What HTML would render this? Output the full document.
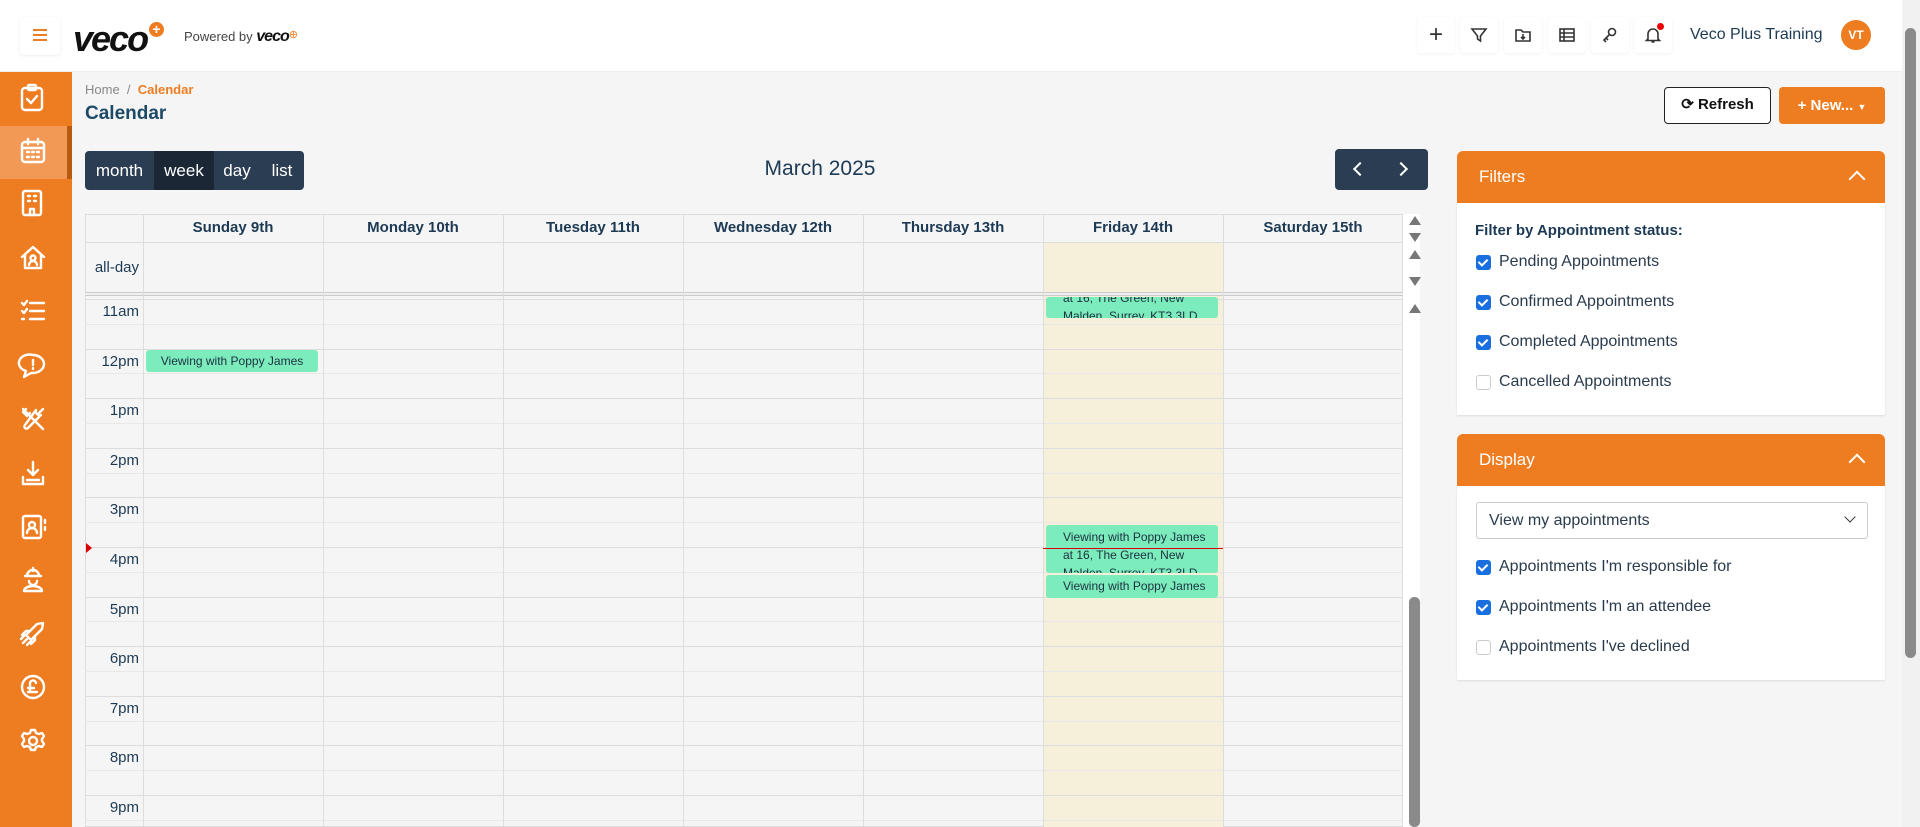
<!DOCTYPE html>
<html><head><meta charset="utf-8"><style>
*{box-sizing:border-box;margin:0;padding:0}
body{width:1920px;height:827px;overflow:hidden;background:#f5f5f5;font-family:"Liberation Sans",sans-serif;position:relative;color:#1d3a55}
.a{position:absolute}
.hdr{left:0;top:0;width:1902px;height:72px;background:#fff;border-bottom:1px solid #eee}
.side{left:0;top:72px;width:72px;height:755px;background:#ee7d22}
.hi{position:absolute;top:17px;width:38px;height:36px;border-radius:4px;box-shadow:0 1px 3px rgba(0,0,0,.06);display:flex;align-items:center;justify-content:center}
.vb{top:151px;height:39px;background:#2b3d52;color:#fff;font-size:17px;line-height:39px;text-align:center}
.line{position:absolute;left:85px;width:1318px;height:1px}
.col{position:absolute;top:214px;width:1px;height:613px;background:#ddd}
.dh{position:absolute;top:214px;width:180px;height:28px;line-height:28px;text-align:center;font-weight:bold;font-size:15px;color:#1d3a55}
.tl{position:absolute;left:85px;width:54px;text-align:right;font-size:15px;color:#1d3a55}
.ev{position:absolute;background:#7cecbc;border-radius:3px;font-size:12px;color:#1b3040;overflow:hidden;line-height:15px}
.cb{position:absolute;left:1476px;width:15px;height:15px;border-radius:3px;background:#1a6fe0}
.cb.off{background:#fff;border:1px solid #ccc}
.cb:not(.off)::after{content:"";position:absolute;left:4px;top:2px;width:4px;height:7px;border:solid #fff;border-width:0 2px 2px 0;transform:rotate(45deg)}
.cl{position:absolute;left:1499px;font-size:16px;color:#2a3b4c}
.ph{position:absolute;left:1457px;width:428px;height:52px;background:#ee7d22;border-radius:6px 6px 0 0;color:#fff;font-size:17px;line-height:52px;padding-left:22px}
.pb{position:absolute;left:1457px;width:428px;background:#fff;box-shadow:0 1px 2px rgba(0,0,0,.1)}
.chev{position:absolute;right:22px;top:22px;width:12px;height:12px;border-left:2px solid #fff;border-top:2px solid #fff;transform:rotate(45deg)}
.tri{position:absolute;left:1409px;width:0;height:0;border-left:6px solid transparent;border-right:6px solid transparent}
.up{border-bottom:9px solid #777}.dn{border-top:9px solid #777}
</style></head><body>
<div class="a hdr"></div>
<div class="a" style="left:20px;top:17px;width:40px;height:38px;border-radius:4px;box-shadow:0 1px 3px rgba(0,0,0,.08)"></div>
<div class="a" style="left:33px;top:29px;width:14px;height:2px;background:#ee7d22;box-shadow:0 5px 0 #ee7d22,0 10px 0 #ee7d22"></div>
<div class="a" style="left:73px;top:18px;font-size:36px;font-weight:bold;font-style:italic;color:#111;letter-spacing:-2px">veco</div>
<div class="a" style="left:149px;top:22px;width:15px;height:15px;border-radius:50%;background:#ee7d22;color:#fff;font-size:14px;line-height:14px;text-align:center;font-weight:bold">+</div>
<div class="a" style="left:184px;top:28px;font-size:13px;color:#444">Powered by <b style="font-style:italic;color:#111;font-size:16px;letter-spacing:-1px">veco</b><span style="color:#ee7d22;font-size:11px;vertical-align:top">⊕</span></div>
<div class="hi" style="left:1417px;font-size:24px;color:#333">+</div>
<div class="hi" style="left:1460px"><svg width="18" height="18" viewBox="0 0 18 18" fill="none" stroke="#333" stroke-width="1.6"><path d="M2 3h14l-5.5 7v5l-3-2V10z"/></svg></div>
<div class="hi" style="left:1504px"><svg width="18" height="18" viewBox="0 0 18 18" fill="none" stroke="#333" stroke-width="1.6"><path d="M2 4h5l2 2h7v9H2z M9 8v5 M7 11l2 2 2-2"/></svg></div>
<div class="hi" style="left:1548px"><svg width="18" height="18" viewBox="0 0 18 18" fill="none" stroke="#333" stroke-width="1.6"><rect x="2" y="3" width="14" height="12"/><path d="M2 7h14M2 11h14M6 3v12"/></svg></div>
<div class="hi" style="left:1591px"><svg width="18" height="18" viewBox="0 0 18 18" fill="none" stroke="#333" stroke-width="1.6"><circle cx="11" cy="6" r="3.5"/><path d="M8.5 8.5L3 14l2 2M5 12l2 2"/></svg></div>
<div class="hi" style="left:1634px"><svg width="20" height="20" viewBox="0 0 20 20" fill="none" stroke="#333" stroke-width="1.6"><path d="M5 14V9a5 5 0 0110 0v5l1.5 1.5h-13z M8.5 17h3"/></svg><span class="a" style="right:8px;top:6px;width:7px;height:7px;border-radius:50%;background:#e00"></span></div>
<div class="a" style="left:1690px;top:26px;font-size:16px;color:#1d3a55">Veco Plus Training</div>
<div class="a" style="left:1841px;top:20px;width:30px;height:30px;border-radius:50%;background:#ee7d22;color:#fff;font-size:12px;font-weight:bold;text-align:center;line-height:30px">VT</div>
<div class="a" style="left:1902px;top:0;width:18px;height:827px;background:#f1f1f1"></div>
<div class="a" style="left:1905px;top:28px;width:11px;height:630px;border-radius:6px;background:#8a8a8a"></div>

<div class="a side"></div>
<div class="a" style="left:0;top:126px;width:72px;height:53px;background:#f29a55;border-right:5px solid #b85a10"></div>
<svg class="a" style="left:0;top:72px" width="72" height="700" fill="none" stroke="#fff" stroke-width="2.4" stroke-linecap="round" stroke-linejoin="round">
<g transform="translate(20,12)"><rect x="2" y="4" width="20" height="22" rx="3"/><rect x="8" y="1" width="8" height="5" rx="1"/><path d="M7 15l4 4 6-7"/></g>
<g transform="translate(20,66)"><rect x="2" y="4" width="22" height="20" rx="3"/><path d="M2 10h22M8 1v5M18 1v5M7 14h2M12 14h2M17 14h2M7 19h2M12 19h2M17 19h2"/></g>
<g transform="translate(22,118)"><rect x="1" y="1" width="18" height="24" rx="2"/><path d="M6 6h2M12 6h2M6 11h2M12 11h2M8 25v-6h4v6"/></g>
<g transform="translate(20,172)"><path d="M2 13L13 3l11 10M5 11v13h16V11"/><circle cx="13" cy="14" r="2.5"/><path d="M9 21a4 4 0 018 0"/></g>
<g transform="translate(20,226)"><path d="M2 5l2 2 3-4M2 13l2 2 3-4M2 21h2M10 5h14M10 13h14M10 21h14"/></g>
<g transform="translate(20,280)"><path d="M13 3a11 9 0 110 18h-2l-7 4 2-6A10 8 0 0113 3z M13 8v5M13 16v1"/></g>
<g transform="translate(20,334)"><path d="M3 3l20 20M6 3l-3 3 4 4 3-3M23 3l-4 4M16 4a4 4 0 005 5L8 22a2 2 0 01-3-3z"/></g>
<g transform="translate(20,388)"><path d="M13 2v13M8 10l5 5 5-5M3 17v7h20v-7M7 20h12"/></g>
<g transform="translate(21,442)"><rect x="2" y="2" width="18" height="22" rx="2"/><circle cx="11" cy="11" r="3"/><path d="M6 19a5 5 0 0110 0M24 6v3M24 13v3"/></g>
<g transform="translate(20,494)"><path d="M7 10a6 6 0 0112 0zM5 10h16M13 2v3M9 15a4 4 0 008 0M4 25a9 5 0 0118 0z"/></g>
<g transform="translate(20,548)"><path d="M7 19l-4 4M10 22l-3 3M4 16l-3 3M6 15L17 4l6-1-1 6-11 11zM6 15l-4 0 4-4h4M11 20v4l4-4v-4"/></g>
<g transform="translate(20,602)"><circle cx="13" cy="13" r="11"/><path d="M16 9a3 3 0 00-6 1v7M8 14h6M8 18h9"/></g>
<g transform="translate(20,656)"><circle cx="13" cy="13" r="4"/><path d="M11 2h4l1 3 3 1 3-1 2 3-2 3v2l2 3-2 3-3-1-3 1-1 3h-4l-1-3-3-1-3 1-2-3 2-3v-2L2 8l2-3 3 1 3-1z"/></g>
</svg>

<div class="a" style="left:85px;top:82px;font-size:13px;color:#888">Home &nbsp;/&nbsp; <span style="color:#ee7d22;font-weight:bold">Calendar</span></div>
<div class="a" style="left:85px;top:103px;font-size:19px;font-weight:bold;color:#1d4a66">Calendar</div>
<div class="a" style="left:1664px;top:87px;width:107px;height:37px;border:1.5px solid #222;border-radius:4px;background:#fff;font-weight:bold;font-size:15px;line-height:34px;text-align:center;color:#111">⟳ Refresh</div>
<div class="a" style="left:1779px;top:87px;width:106px;height:37px;border-radius:4px;background:#ee7d22;color:#fff;font-weight:bold;font-size:15px;line-height:37px;text-align:center">+ New... <span style="font-size:9px">▼</span></div>

<div class="a vb" style="left:85px;width:69px;border-radius:4px 0 0 4px">month</div>
<div class="a vb" style="left:154px;width:60px;background:#1b2735">week</div>
<div class="a vb" style="left:214px;width:46px">day</div>
<div class="a vb" style="left:260px;width:44px;border-radius:0 4px 4px 0">list</div>
<div class="a" style="left:720px;top:157px;width:200px;text-align:center;font-size:21px;color:#1d3a55">March 2025</div>
<div class="a" style="left:1335px;top:149px;width:93px;height:41px;background:#2b3d52;border-radius:4px"></div>
<div class="a" style="left:1355px;top:164px;width:10px;height:10px;border-left:2.5px solid #fff;border-bottom:2.5px solid #fff;transform:rotate(45deg)"></div>
<div class="a" style="left:1396px;top:164px;width:10px;height:10px;border-right:2.5px solid #fff;border-top:2.5px solid #fff;transform:rotate(45deg)"></div>

<div class="a" style="left:85px;top:214px;width:1318px;height:613px;border:1px solid #ddd;background:#f5f5f5"></div>
<div class="a" style="left:1043px;top:242px;width:180px;height:585px;background:#f6efd9"></div>
<div class="a" style="left:1403px;top:214px;width:17px;height:613px;background:#fff"></div>
<div class="a" style="left:1409px;top:597px;width:11px;height:230px;border-radius:5px;background:#8a8a8a"></div>
<div class="tri up" style="top:216px"></div><div class="tri dn" style="top:233px"></div>
<div class="tri up" style="top:250px"></div><div class="tri dn" style="top:277px"></div>
<div class="tri up" style="top:304px"></div>
<div class="line" style="top:242px;background:#ddd"></div>
<div class="line" style="top:292px;height:4px;border-top:1px solid #ccc;border-bottom:1px solid #ccc;background:#eee"></div>
<div id="rows"></div>
<div class="col" style="left:143px"></div><div class="col" style="left:323px"></div><div class="col" style="left:503px"></div><div class="col" style="left:683px"></div><div class="col" style="left:863px"></div><div class="col" style="left:1043px"></div><div class="col" style="left:1223px"></div>
<div class="dh" style="left:143px">Sunday 9th</div><div class="dh" style="left:323px">Monday 10th</div><div class="dh" style="left:503px">Tuesday 11th</div><div class="dh" style="left:683px">Wednesday 12th</div><div class="dh" style="left:863px">Thursday 13th</div><div class="dh" style="left:1043px">Friday 14th</div><div class="dh" style="left:1223px">Saturday 15th</div>
<div class="tl" style="top:259px">all-day</div>
<script>
var h='',labels=['11am','12pm','1pm','2pm','3pm','4pm','5pm','6pm','7pm','8pm','9pm'];
for(var i=0;i<11;i++){var y=299+i*49.6;h+='<div class="line" style="top:'+Math.round(y)+'px;background:#ddd"></div><div class="line" style="top:'+Math.round(y+24.8)+'px;background:#e8e8e8"></div><div class="tl" style="top:'+Math.round(y+4)+'px">'+labels[i]+'</div>';}
document.getElementById('rows').outerHTML=h;
</script>
<div class="ev" style="left:1046px;top:297px;width:172px;height:21px;padding-left:17px;line-height:18px"><div style="margin-top:-8px">at 16, The Green, New<br>Malden, Surrey, KT3 3LD</div></div>
<div class="ev" style="left:146px;top:350px;width:172px;height:22px;text-align:center;line-height:22px">Viewing with Poppy James</div>
<div class="ev" style="left:1046px;top:525px;width:172px;height:48px;padding-left:17px;padding-top:3px;line-height:18px">Viewing with Poppy James<br>at 16, The Green, New<br>Malden, Surrey, KT3 3LD</div>
<div class="ev" style="left:1046px;top:575px;width:172px;height:23px;padding-left:17px;line-height:22px">Viewing with Poppy James</div>
<div class="a" style="left:1043px;top:548px;width:180px;height:1px;background:#d00"></div>
<div class="a" style="left:86px;top:543px;width:0;height:0;border-left:6px solid #d00;border-top:5px solid transparent;border-bottom:5px solid transparent"></div>

<div class="ph" style="top:151px">Filters<span class="chev"></span></div>
<div class="pb" style="top:203px;height:212px"></div>
<div class="a" style="left:1475px;top:222px;font-size:15px;font-weight:bold;color:#1d3a55">Filter by Appointment status:</div>
<div class="cb" style="top:255px"></div><div class="cl" style="top:253px">Pending Appointments</div>
<div class="cb" style="top:295px"></div><div class="cl" style="top:293px">Confirmed Appointments</div>
<div class="cb" style="top:335px"></div><div class="cl" style="top:333px">Completed Appointments</div>
<div class="cb off" style="top:375px"></div><div class="cl" style="top:373px">Cancelled Appointments</div>
<div class="ph" style="top:434px">Display<span class="chev"></span></div>
<div class="pb" style="top:486px;height:194px"></div>
<div class="a" style="left:1476px;top:502px;width:392px;height:37px;border:1px solid #ccc;border-radius:3px;background:#fff;font-size:16px;line-height:35px;padding-left:12px;color:#2a3b4c">View my appointments</div>
<div class="a" style="left:1846px;top:513px;width:8px;height:8px;border-right:1.8px solid #333;border-bottom:1.8px solid #333;transform:rotate(45deg)"></div>
<div class="cb" style="top:560px"></div><div class="cl" style="top:558px">Appointments I'm responsible for</div>
<div class="cb" style="top:600px"></div><div class="cl" style="top:598px">Appointments I'm an attendee</div>
<div class="cb off" style="top:640px"></div><div class="cl" style="top:638px">Appointments I've declined</div>
</body></html>
